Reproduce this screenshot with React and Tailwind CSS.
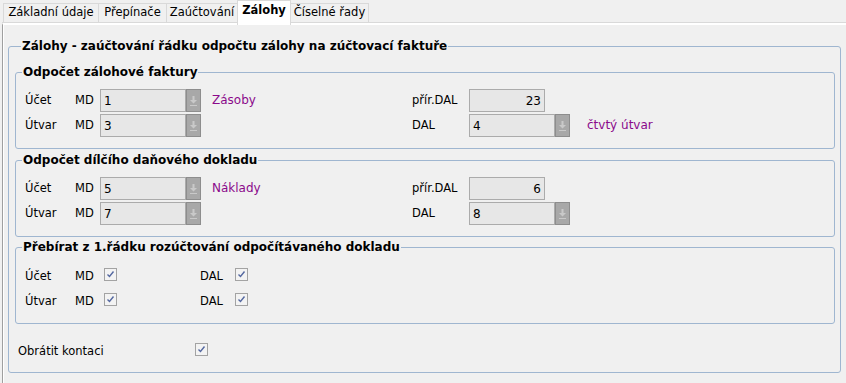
import React from "react";

function Group({ title, className, children }) {
  return (
    <div className={"border border-[#9fb6d0] rounded-[3px] " + className}>
      <div className="-mt-[9px] ml-[6px] w-fit px-[1px] bg-[#f0f0f0] leading-[16px] text-[12px] font-bold text-black">
        {title}
      </div>
      {children}
    </div>
  );
}

function DropBtn() {
  return (
    <div className="w-[15px] h-[23px] border border-[#8d8d8d] bg-[#a8a8a8] flex items-center justify-center">
      <svg width="9" height="12" viewBox="0 0 9 12">
        <rect x="3.5" y="1" width="2" height="4" fill="#c9c9c9" />
        <path d="M1 5 L8 5 L4.5 8.5 Z" fill="#c9c9c9" />
        <rect x="1" y="10" width="7" height="1" fill="#c9c9c9" />
      </svg>
    </div>
  );
}

function Field({ width, value, right }) {
  return (
    <div
      className={
        "h-[23px] border border-[#ababab] bg-[#e7e7e7] flex items-center text-[12px] text-black " +
        (right ? "justify-end pr-[3px] " : "pl-[3px] ") +
        width
      }
    >
      {value}
    </div>
  );
}

function Check() {
  return (
    <div className="w-[13px] h-[13px] border border-[#a3a3a3] bg-[#f3f3f3] flex items-center justify-center mb-[5px]">
      <svg width="11" height="11" viewBox="0 0 11 11">
        <path d="M2.5 5.5 L4.5 7.5 L8.5 2.5" stroke="#5468a0" strokeWidth="1.4" fill="none" />
      </svg>
    </div>
  );
}

function AccRows({ a, b }) {
  return (
    <div className="pl-[9px] pt-[9px] pb-[11px] flex flex-col gap-[2px]">
      <div className="flex items-center h-[23px]">
        <div className="w-[387px] flex items-center">
          <span className="w-[50px]">Účet</span>
          <span className="w-[25px]">MD</span>
          <Field width="w-[86px]" value={a.ucet} />
          <DropBtn />
          <span className="ml-[11px] text-[#8b0a8b] -mt-[2px] text-[12px]">{a.ucetName}</span>
        </div>
        <span className="w-[57px]">přír.DAL</span>
        <Field width="w-[76px]" value={a.pril} right />
      </div>
      <div className="flex items-center h-[23px]">
        <div className="w-[387px] flex items-center">
          <span className="w-[50px]">Útvar</span>
          <span className="w-[25px]">MD</span>
          <Field width="w-[86px]" value={b.utvar} />
          <DropBtn />
        </div>
        <span className="w-[57px]">DAL</span>
        <Field width="w-[86px]" value={b.dal} />
        <DropBtn />
        {b.dalName && (
          <span className="ml-[17px] text-[#8b0a8b] -mt-[2px] text-[12px]">{b.dalName}</span>
        )}
      </div>
    </div>
  );
}

export default function App() {
  const tabs = [
    { t: "Základní údaje", w: "w-[95px]" },
    { t: "Přepínače", w: "w-[68px]" },
    { t: "Zaúčtování", w: "w-[71px]" },
  ];
  return (
    <div className="w-[846px] h-[383px] bg-[#f0f0f0] font-['DejaVu_Sans',sans-serif] text-[11.5px] text-black flex flex-col overflow-hidden">
      <div className="h-[22px] flex items-end pl-[3px]">
        {tabs.map((x) => (
          <div
            key={x.t}
            className={"h-[19px] border-l border-t border-[#d9d9d9] flex items-center justify-center " + x.w}
          >
            {x.t}
          </div>
        ))}
        <div className="relative z-10 self-start h-[25px] w-[54px] bg-white border-l border-t border-r border-[#d9d9d9] flex items-center justify-center font-bold text-[11.5px] pb-[4px]">
          Zálohy
        </div>
        <div className="h-[19px] w-[78px] border-t border-r border-[#d9d9d9] flex items-center justify-center">
          Číselné řady
        </div>
      </div>
      <div className="flex-1 border-t border-[#d9d9d9] ml-[2px]">
        <div className="h-full border-t-2 border-t-white border-l border-l-[#9f9f9f]">
          <div className="h-full border-l border-l-white pt-[21px]">
            <Group title="Zálohy - zaúčtování řádku odpočtu zálohy na zúčtovací faktuře" className="ml-[4px] w-[833px] pl-[6px] pr-[5px] pb-[8px]">
              <Group title="Odpočet zálohové faktury" className="mt-[18px]">
                <AccRows a={{ ucet: "1", ucetName: "Zásoby", pril: "23" }} b={{ utvar: "3", dal: "4", dalName: "čtvtý útvar" }} />
              </Group>
              <Group title="Odpočet dílčího daňového dokladu" className="mt-[11px]">
                <AccRows a={{ ucet: "5", ucetName: "Náklady", pril: "6" }} b={{ utvar: "7", dal: "8" }} />
              </Group>
              <Group title="Přebírat z 1.řádku rozúčtování odpočítávaného dokladu" className="mt-[10px]">
                <div className="pl-[9px] pt-[9px] pb-[9px]">
                  <div className="flex items-center h-[25px]">
                    <div className="w-[175px] flex items-center">
                      <span className="w-[50px]">Účet</span>
                      <span className="w-[29px]">MD</span>
                      <Check />
                    </div>
                    <span className="w-[35px]">DAL</span>
                    <Check />
                  </div>
                  <div className="flex items-center h-[25px]">
                    <div className="w-[175px] flex items-center">
                      <span className="w-[50px]">Útvar</span>
                      <span className="w-[29px]">MD</span>
                      <Check />
                    </div>
                    <span className="w-[35px]">DAL</span>
                    <Check />
                  </div>
                </div>
              </Group>
              <div className="mt-[15px] h-[25px] flex items-center pl-[3px]">
                <span className="w-[177px]">Obrátit kontaci</span>
                <Check />
              </div>
            </Group>
          </div>
        </div>
      </div>
    </div>
  );
}
